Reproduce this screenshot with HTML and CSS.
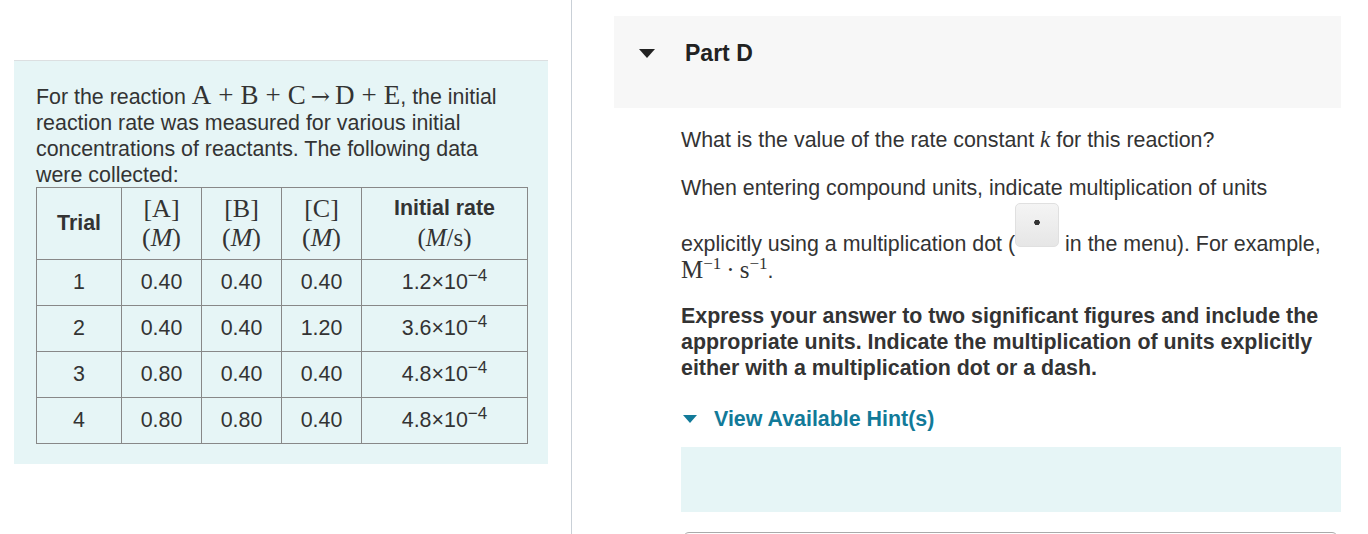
FILE: index.html
```html
<!DOCTYPE html>
<html lang="en">
  <head>
    <meta charset="UTF-8" />
    <title>Part D</title>
    <link rel="stylesheet" href="styles.css">
  </head>
  <body>
    <div class="page">
      <div class="left">
        <div class="intro">
          <p>
            For the reaction
            <span class="math eq">A<span class="op">+</span>B<span class="op">+</span>C<span class="rel">→</span>D<span class="op">+</span>E</span>, the initial
            reaction rate was measured for various initial concentrations of
            reactants. The following data were collected:
          </p>
          <table class="data">
            <tr class="head">
              <th class="trial">Trial</th>
              <th class="conc"><span class="math">[A]<br />(<i>M</i>)</span></th>
              <th class="conc"><span class="math">[B]<br />(<i>M</i>)</span></th>
              <th class="conc"><span class="math">[C]<br />(<i>M</i>)</span></th>
              <th class="rate">Initial rate<br /><span class="math">(<i>M</i>/s)</span></th>
            </tr>
            <tr>
              <td>1</td><td>0.40</td><td>0.40</td><td>0.40</td>
              <td>1.2×10<sup>−4</sup></td>
            </tr>
            <tr>
              <td>2</td><td>0.40</td><td>0.40</td><td>1.20</td>
              <td>3.6×10<sup>−4</sup></td>
            </tr>
            <tr>
              <td>3</td><td>0.80</td><td>0.40</td><td>0.40</td>
              <td>4.8×10<sup>−4</sup></td>
            </tr>
            <tr>
              <td>4</td><td>0.80</td><td>0.80</td><td>0.40</td>
              <td>4.8×10<sup>−4</sup></td>
            </tr>
          </table>
        </div>
      </div>

      <div class="divider"></div>

      <div class="right">
        <div class="part-head">
          <span class="tri"></span>
          <h2>Part D</h2>
        </div>

        <div class="question">
          <p>What is the value of the rate constant <span class="math"><i>k</i></span> for this reaction?</p>
          <p class="units-note">
            When entering compound units, indicate multiplication of units
            explicitly using a multiplication dot (<span class="dot-btn"></span>
            in the menu). For example,
            <span class="math unit">M<sup>−1</sup><span class="op">·</span>s<sup>−1</sup></span>.
          </p>
          <p class="bold">
            Express your answer to two significant figures and include the
            appropriate units. Indicate the multiplication of units explicitly
            either with a multiplication dot or a dash.
          </p>

          <div class="hint-link">
            <span class="tri teal"></span>
            <span>View Available Hint(s)</span>
          </div>
          <div class="hint-box"></div>
          <div class="answer"></div>
        </div>
      </div>
    </div>
  </body>
</html>
```

FILE: styles.css
```css
body {
  margin: 0;
  font-family: "Liberation Sans", Arial, sans-serif;
  font-size: 21.4px;
  color: #333;
  background: #fff;
}

.page {
  display: flex;
  height: 534px;
  overflow: hidden;
}

.math {
  font-family: "Liberation Serif", "Times New Roman", serif;
  font-size: 26px;
}

.math.eq {
  font-size: 27px;
  line-height: 0;
}

.math .op {
  margin: 0 7px;
}

.math .rel {
  margin: 0 5px;
  font-family: "DejaVu Serif", serif;
  font-size: 23px;
}

/* left column */
.left {
  width: 571px;
  padding-top: 60px;
  box-sizing: border-box;
}

.intro {
  margin-left: 14px;
  width: 534px;
  box-sizing: border-box;
  background: #e6f5f6;
  border-top: 1px solid #dcdfe1;
  padding: 23px 20px 20px 22px;
}

.intro p {
  margin: 0 0 -1px;
  line-height: 26px;
}

.data {
  border-collapse: collapse;
  width: 492px;
}

.data th,
.data td {
  border: 1px solid #888;
  text-align: center;
  padding: 0;
}

.data td {
  height: 45px;
}

.data .head th {
  height: 71px;
}

.trial {
  width: 84px;
}

.conc {
  width: 79px;
  line-height: 28px;
  font-weight: normal;
}

.rate {
  line-height: 30px;
}

.rate .math {
  font-weight: normal;
  font-size: 25px;
}

.data sup {
  font-size: 17px;
  line-height: 0;
}

/* divider */
.divider {
  width: 1px;
  background: #c9d0d7;
}

/* right column */
.right {
  flex: 1;
  padding: 16px 27px 0 42px;
}

.part-head {
  display: flex;
  align-items: center;
  height: 92px;
  padding: 0 0 18px 25px;
  box-sizing: border-box;
  background: #f7f7f7;
}

.part-head h2 {
  margin: 0 0 0 30px;
  font-size: 23px;
  color: #222;
}

.tri {
  width: 0;
  height: 0;
  border-left: 8px solid transparent;
  border-right: 8px solid transparent;
  border-top: 9px solid #222;
}

.tri.teal {
  border-top-color: #127a99;
  border-left-width: 7px;
  border-right-width: 7px;
  border-top-width: 8px;
}

.question {
  padding-left: 67px;
}

.question p {
  margin: 19px 0 22px;
  line-height: 26px;
}

.question p.units-note {
  margin-bottom: 19px;
}

.question .math {
  font-size: 23px;
}

.question .unit {
  font-size: 25px;
}

.question sup {
  font-size: 17px;
  line-height: 0;
}

.unit .op {
  margin: 0 5px;
}

.dot-btn {
  display: inline-block;
  width: 44px;
  height: 44px;
  margin-top: 2px;
  box-sizing: border-box;
  border: 1px solid #e0e0e0;
  border-radius: 5px;
  background: radial-gradient(circle at 50% 44%, #333 2.5px, transparent 3px),
    linear-gradient(#f4f4f4, #e6e6e6);
  vertical-align: 4px;
}

.bold {
  font-weight: bold;
}

.hint-link {
  display: flex;
  align-items: center;
  gap: 17px;
  margin-top: 25px;
  padding-left: 2px;
  line-height: 26px;
  color: #127a99;
  font-weight: bold;
}

.hint-box {
  margin-top: 15px;
  height: 65px;
  background: #e6f5f6;
}

.answer {
  margin: 20px 3px 0 2px;
  height: 40px;
  border: 1px solid #aaa;
  border-radius: 6px;
}
```
